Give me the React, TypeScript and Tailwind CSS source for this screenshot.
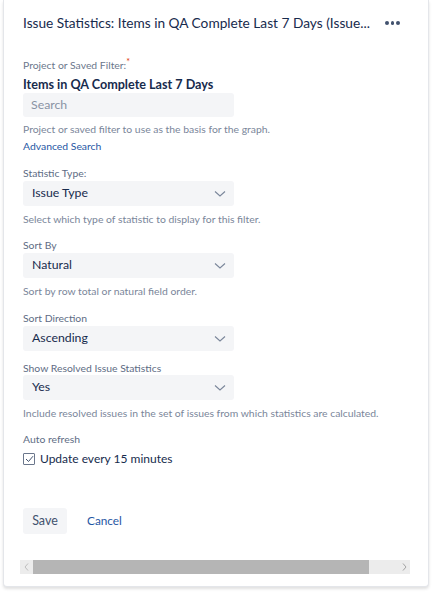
import React from "react";

function Chevron() {
  return (
    <svg width="12" height="8" viewBox="0 0 12 8" fill="none">
      <path d="M1 1.5 L6 6 L11 1.5" stroke="#7a869a" strokeWidth="1.1" />
    </svg>
  );
}

function Select({ value }: { value: string }) {
  return (
    <div className="flex h-[25px] w-[211px] items-center justify-between rounded-[3px] bg-[#f4f5f7] pl-[9px] pr-[8px] text-[12.3px] text-[#172b4d]">
      <span>{value}</span>
      <Chevron />
    </div>
  );
}

const label = "text-[10.4px] leading-[15px] text-[#5e6c84]";
const desc = "text-[10.4px] leading-[15px] text-[#7a869a]";

export default function App() {
  return (
    <div className="h-[593px] w-[433px] bg-white pl-[3px]" style={{ fontFamily: 'Lato, "Noto Sans", sans-serif' }}>
      <div className="h-[587px] w-[426px] rounded-b-[4px] border border-t-0 border-[#e4e6ea] bg-white pl-[19px] shadow-[0_2px_3px_rgba(0,0,0,0.12)]">
        <div className="flex h-[45px] items-center pt-[1px]">
          <div className="w-[352px] whitespace-nowrap text-[13.7px] text-[#172b4d]">
            Issue Statistics: Items in QA Complete Last 7 Days (Issue...
          </div>
          <div className="ml-[10px] flex gap-[2px]">
            <span className="h-[3.5px] w-[3.5px] rounded-full bg-[#42526e]" />
            <span className="h-[3.5px] w-[3.5px] rounded-full bg-[#42526e]" />
            <span className="h-[3.5px] w-[3.5px] rounded-full bg-[#42526e]" />
          </div>
        </div>

        <div className="pt-[13px]">
          <div className="text-[10.4px] leading-[15px] text-[#6b778c]">
            Project or Saved Filter:<span className="relative -top-[4px] text-[9px] text-[#de350b]">*</span>
          </div>
          <div className="mt-[4px] text-[12.6px] font-bold leading-[16px] text-[#172b4d]">Items in QA Complete Last 7 Days</div>
          <div className="flex h-[24px] w-[211px] items-center rounded-[3px] bg-[#f4f5f7] pl-[8px] text-[12.3px] text-[#8993a4]">
            Search
          </div>
          <div className={`mt-[5px] ${desc}`}>Project or saved filter to use as the basis for the graph.</div>
          <div className="mt-[2px] text-[10.4px] leading-[15px] text-[#1f57a4]">Advanced Search</div>
        </div>

        <div className="mt-[12px]">
          <div className={label}>Statistic Type:</div>
          <Select value="Issue Type" />
          <div className={`mt-[6px] ${desc}`}>Select which type of statistic to display for this filter.</div>
        </div>

        <div className="mt-[11px]">
          <div className={label}>Sort By</div>
          <Select value="Natural" />
          <div className={`mt-[6px] ${desc}`}>Sort by row total or natural field order.</div>
        </div>

        <div className="mt-[12px]">
          <div className={label}>Sort Direction</div>
          <Select value="Ascending" />
        </div>

        <div className="mt-[10px]">
          <div className={label}>Show Resolved Issue Statistics</div>
          <div className="-mt-[1px]"><Select value="Yes" /></div>
          <div className={`mt-[6px] ${desc}`}>Include resolved issues in the set of issues from which statistics are calculated.</div>
        </div>

        <div className="mt-[11px]">
          <div className={label}>Auto refresh</div>
          <div className="mt-[3px] flex items-center gap-[5px]">
            <div className="flex h-[12px] w-[12px] items-center justify-center rounded-[1px] border border-[#6b778c] bg-white">
              <svg width="9" height="8" viewBox="0 0 9 8" fill="none">
                <path d="M1 4 L3.5 6.5 L8 1.2" stroke="#42526e" strokeWidth="1" />
              </svg>
            </div>
            <span className="text-[12px] leading-[18px] text-[#172b4d]">Update every 15 minutes</span>
          </div>
        </div>

        <div className="mt-[40px] flex items-center">
          <div className="flex h-[26px] w-[44px] items-center justify-center rounded-[3px] bg-[#f4f5f7] text-[12.5px] text-[#42526e]">Save</div>
          <div className="ml-[20px] text-[11.8px] text-[#1f57a4]">Cancel</div>
        </div>

        <div className="-ml-[3px] mt-[26px] flex h-[14px] w-[390px] items-center bg-[#ececec]">
          <div className="flex w-[13px] items-center justify-center">
            <svg width="5" height="8" viewBox="0 0 5 8" fill="none"><path d="M4 0.5 L1 4 L4 7.5" stroke="#b8b8b8" strokeWidth="0.9" /></svg>
          </div>
          <div className="h-[14px] w-[336px] bg-[#b5b5b5]" />
          <div className="flex flex-1 items-center justify-end pr-[3px]">
            <svg width="5" height="8" viewBox="0 0 5 8" fill="none"><path d="M1 0.5 L4 4 L1 7.5" stroke="#9a9a9a" strokeWidth="0.9" /></svg>
          </div>
        </div>
      </div>
    </div>
  );
}
